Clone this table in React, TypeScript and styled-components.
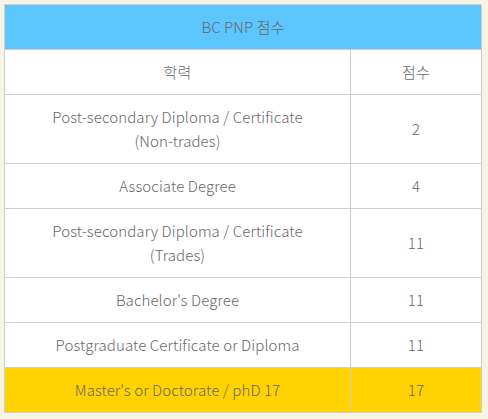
import React from "react";
import styled, { createGlobalStyle } from "styled-components";

const Global = createGlobalStyle`
  html, body { margin: 0; padding: 0; background: #f6f4e2; }
  body { font-family: "Noto Sans CJK KR", "Noto Sans", sans-serif; }
`;

const Page = styled.div`
  padding: 4px;
`;

const Table = styled.table`
  width: 478px;
  border-collapse: collapse;
  border: 1px solid #cfcfcf;
  background: #ffffff;
  color: #686868;
  font-size: 15px;
  font-weight: 300;
  line-height: 24px;
  letter-spacing: 0.1px;
`;

const Cell = styled.td<{ $bg?: string }>`
  border: 1px solid #cfcfcf;
  padding: 10px 8px;
  text-align: center;
  vertical-align: middle;
  background: ${(p) => p.$bg ?? "transparent"};
`;

const ScoreCell = styled(Cell)`
  width: 114px;
`;

const rows: { name: React.ReactNode; score: string; hi?: boolean }[] = [
  { name: <>Post-secondary Diploma / Certificate<br />(Non-trades)</>, score: "2" },
  { name: "Associate Degree", score: "4" },
  { name: <>Post-secondary Diploma / Certificate<br />(Trades)</>, score: "11" },
  { name: "Bachelor's Degree", score: "11" },
  { name: "Postgraduate Certificate or Diploma", score: "11" },
  { name: "Master's or Doctorate / phD 17", score: "17", hi: true },
];

export default function App() {
  return (
    <>
      <Global />
      <Page>
        <Table>
          <tbody>
            <tr>
              <Cell colSpan={2} $bg="#5cc6fe">BC PNP 점수</Cell>
            </tr>
            <tr>
              <Cell>학력</Cell>
              <ScoreCell>점수</ScoreCell>
            </tr>
            {rows.map((r, i) => (
              <tr key={i}>
                <Cell $bg={r.hi ? "#ffd200" : undefined}>{r.name}</Cell>
                <ScoreCell $bg={r.hi ? "#ffd200" : undefined}>{r.score}</ScoreCell>
              </tr>
            ))}
          </tbody>
        </Table>
      </Page>
    </>
  );
}
